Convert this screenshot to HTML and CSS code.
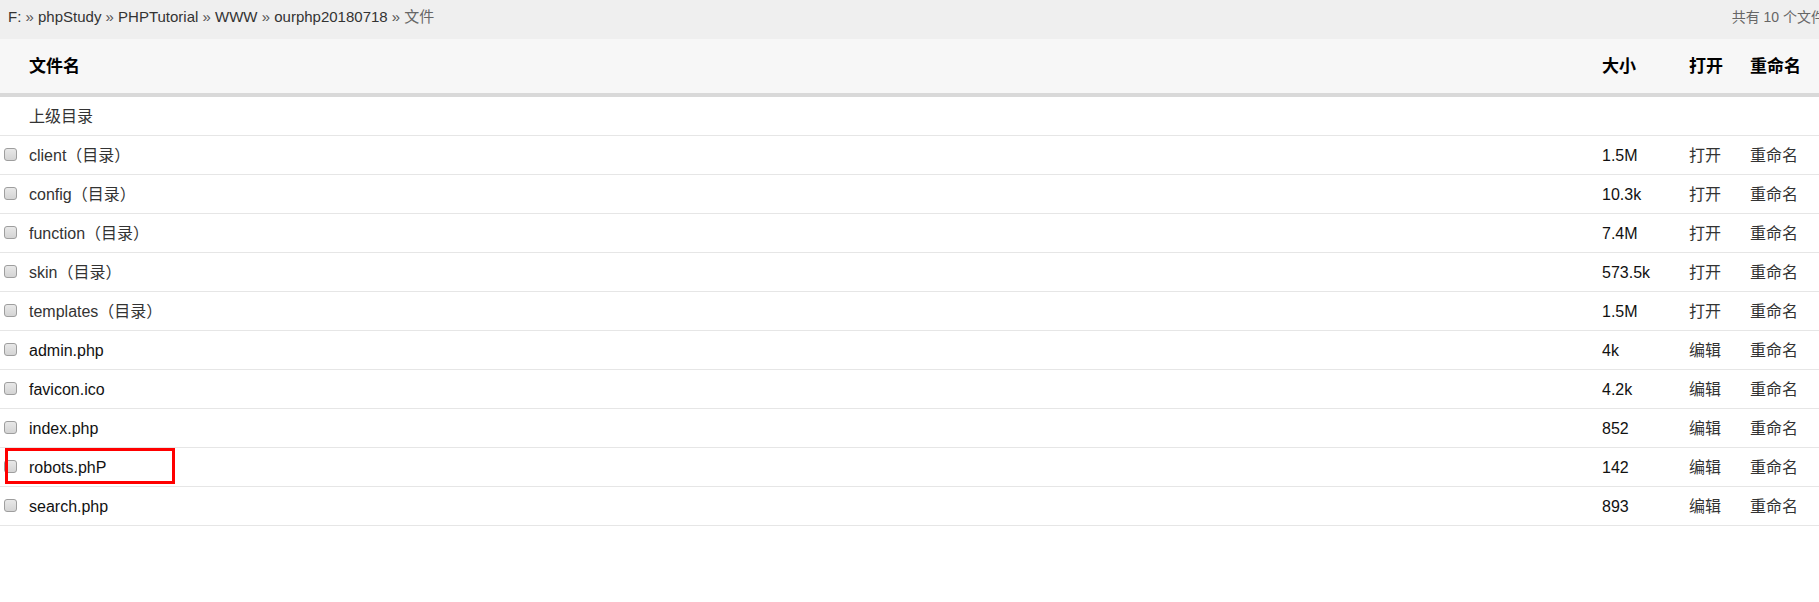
FILE: index.html
```html
<!DOCTYPE html>
<html lang="zh-CN">
<head>
<meta charset="utf-8">
<title>文件</title>
<link rel="stylesheet" href="styles.css">
</head>
<body>
<div class="topbar">
  <div class="crumbs">F: <span class="sep">»</span> phpStudy <span class="sep">»</span> PHPTutorial <span class="sep">»</span> WWW <span class="sep">»</span> ourphp20180718 <span class="sep">»</span> <span class="cur">文件</span></div>
  <div class="count">共有 10 个文件</div>
</div>
<div class="files">
  <div class="row head">
    <div></div><div>文件名</div><div>大小</div><div>打开</div><div>重命名</div>
  </div>
  <div class="row">
    <div></div><div>上级目录</div><div></div><div></div><div></div>
  </div>
  <div class="row"><div><input type="checkbox" class="cb"></div><div>client（目录）</div><div class="size">1.5M</div><div>打开</div><div>重命名</div></div>
  <div class="row"><div><input type="checkbox" class="cb"></div><div>config（目录）</div><div class="size">10.3k</div><div>打开</div><div>重命名</div></div>
  <div class="row"><div><input type="checkbox" class="cb"></div><div>function（目录）</div><div class="size">7.4M</div><div>打开</div><div>重命名</div></div>
  <div class="row"><div><input type="checkbox" class="cb"></div><div>skin（目录）</div><div class="size">573.5k</div><div>打开</div><div>重命名</div></div>
  <div class="row"><div><input type="checkbox" class="cb"></div><div>templates（目录）</div><div class="size">1.5M</div><div>打开</div><div>重命名</div></div>
  <div class="row"><div><input type="checkbox" class="cb"></div><div class="file">admin.php</div><div class="size">4k</div><div>编辑</div><div>重命名</div></div>
  <div class="row"><div><input type="checkbox" class="cb"></div><div class="file">favicon.ico</div><div class="size">4.2k</div><div>编辑</div><div>重命名</div></div>
  <div class="row"><div><input type="checkbox" class="cb"></div><div class="file">index.php</div><div class="size">852</div><div>编辑</div><div>重命名</div></div>
  <div class="row marked"><div><input type="checkbox" class="cb"></div><div class="file">robots.phP</div><div class="size">142</div><div>编辑</div><div>重命名</div><span class="highlight"></span></div>
  <div class="row"><div><input type="checkbox" class="cb"></div><div class="file">search.php</div><div class="size">893</div><div>编辑</div><div>重命名</div></div>
</div>
</body>
</html>
```

FILE: styles.css
```css
html, body {
  margin: 0;
  padding: 0;
  overflow: hidden;
  background: #fff;
}

body {
  font-family: "Liberation Sans", Arial, "Noto Sans CJK SC", sans-serif;
  font-size: 16px;
  color: #333;
}

.topbar {
  height: 39px;
  box-sizing: border-box;
  background: #efefef;
  display: flex;
  justify-content: space-between;
  align-items: flex-start;
  padding: 8px 8px 0 8px;
  white-space: nowrap;
}

.crumbs {
  font-size: 15px;
  line-height: 18px;
  color: #333;
}

.crumbs .sep {
  color: #555;
}

.crumbs .cur {
  color: #666;
}

.count {
  font-size: 14px;
  line-height: 18px;
  color: #666;
  margin-right: -14px;
}

.files {
  display: flex;
  flex-direction: column;
}

.row {
  display: grid;
  grid-template-columns: 29px 1fr 87px 61px 69px;
  align-items: center;
  height: 39px;
  box-sizing: border-box;
  padding-top: 2px;
  border-bottom: 1px solid #e6e6e6;
  line-height: 20px;
  white-space: nowrap;
  color: #333;
}

.row.head {
  height: 58px;
  background: #f7f7f7;
  border-bottom: 4px solid #d9d9d9;
  font-size: 17px;
  font-weight: bold;
  color: #000;
  padding-top: 2px;
}

.row .file,
.row .size {
  color: #111;
}

.cb {
  appearance: none;
  -webkit-appearance: none;
  display: block;
  width: 13px;
  height: 13px;
  margin: -4px 0 0 4px;
  box-sizing: border-box;
  border: 1px solid #9e9e9e;
  border-radius: 3px;
  background: linear-gradient(#e8e8e8, #d4d4d4);
}

.marked {
  position: relative;
}

.highlight {
  position: absolute;
  left: 5px;
  top: 0;
  width: 170px;
  height: 36px;
  box-sizing: border-box;
  border: 3px solid #f00;
  pointer-events: none;
}
```
